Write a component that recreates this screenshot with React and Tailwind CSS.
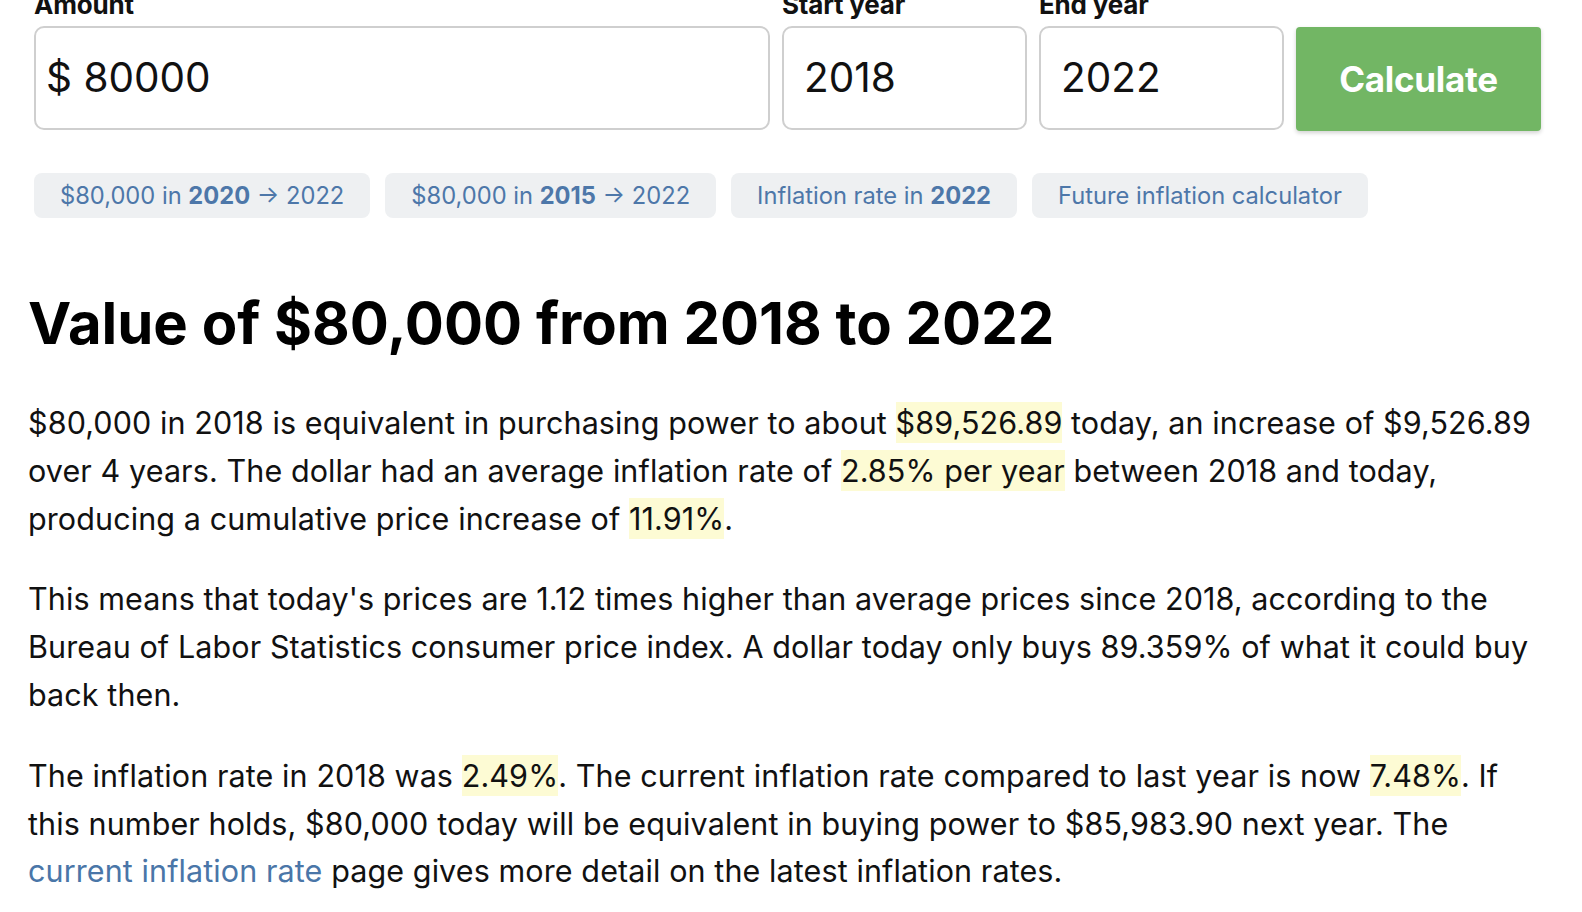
import React from "react";

// Inflation calculator result page — form row, quick-link pills, then the summary text.
const PILLS = [
  { pre: "$80,000 in ", bold: "2020", post: " → 2022" },
  { pre: "$80,000 in ", bold: "2015", post: " → 2022" },
  { pre: "Inflation rate in ", bold: "2022", post: "" },
  { pre: "Future inflation calculator", bold: "", post: "" },
];

function Hl({ children }) {
  return <span className="bg-[#fdfbd4] py-[2px]">{children}</span>;
}

function Field({ label, value, className, prefix }) {
  return (
    <div className={`flex flex-col ${className}`}>
      <label className="text-[26px] font-bold leading-[32px] text-[#111] tracking-[-0.2px]">{label}</label>
      <div className={`mt-[5px] h-[104px] rounded-[10px] border-2 border-[#cfcfcf] bg-white flex items-center ${prefix ? "pl-[10px]" : "pl-[20px]"}`}>
        <span className="text-[40.5px] text-[#111] leading-none">
          {prefix}
          {value}
        </span>
      </div>
    </div>
  );
}

export default function App() {
  return (
    <div className="w-[1582px] h-[912px] overflow-hidden bg-white text-[#111]" style={{ fontFamily: "Inter, 'Noto Sans', sans-serif" }}>
      <div className="pl-[34px] mt-[-11px] flex items-end gap-[12px]">
        <Field label="Amount" value="80000" prefix="$ " className="w-[736px]" />
        <Field label="Start year" value="2018" className="w-[245px]" />
        <Field label="End year" value="2022" className="w-[245px]" />
        <button className="w-[245px] h-[104px] mb-[-1px] rounded-[4px] bg-[#72b664] text-white text-[35px] font-bold tracking-[-0.3px] shadow-[0_2px_4px_rgba(0,0,0,0.18)]">
          Calculate
        </button>
      </div>

      <div className="pl-[34px] mt-[43px] flex gap-[15px]">
        {PILLS.map((p, i) => (
          <div key={i} className="h-[45px] px-[26px] rounded-[8px] bg-[#eef0f2] flex items-center text-[23.7px] text-[#4d77a9] whitespace-pre">
            {p.pre}
            {p.bold && <b className="font-bold">{p.bold}</b>}
            {p.post}
          </div>
        ))}
      </div>

      <div className="pl-[28px] pr-[40px]">
        <h1 className="mt-[71px] text-[58px] font-bold leading-[68px] tracking-[0px] text-black">
          Value of $80,000 from 2018 to 2022
        </h1>

        <div className="mt-[42px] text-[30.5px] leading-[47.8px] tracking-[0.1px] flex flex-col gap-[33px]">
          <p>
            $80,000 in 2018 is equivalent in purchasing power to about <Hl>$89,526.89</Hl> today, an increase of $9,526.89
            over 4 years. The dollar had an average inflation rate of <Hl>2.85% per year</Hl> between 2018 and today,
            producing a cumulative price increase of <Hl>11.91%</Hl>.
          </p>
          <p>
            This means that today's prices are 1.12 times higher than average prices since 2018, according to the Bureau
            of Labor Statistics consumer price index. A dollar today only buys 89.359% of what it could buy back then.
          </p>
          <p>
            The inflation rate in 2018 was <Hl>2.49%</Hl>. The current inflation rate compared to last year is now{" "}
            <Hl>7.48%</Hl>. If this number holds, $80,000 today will be equivalent in buying power to $85,983.90 next year.
            The <a className="text-[#4a76a8]">current inflation rate</a> page gives more detail on the latest inflation
            rates.
          </p>
        </div>
      </div>
    </div>
  );
}
